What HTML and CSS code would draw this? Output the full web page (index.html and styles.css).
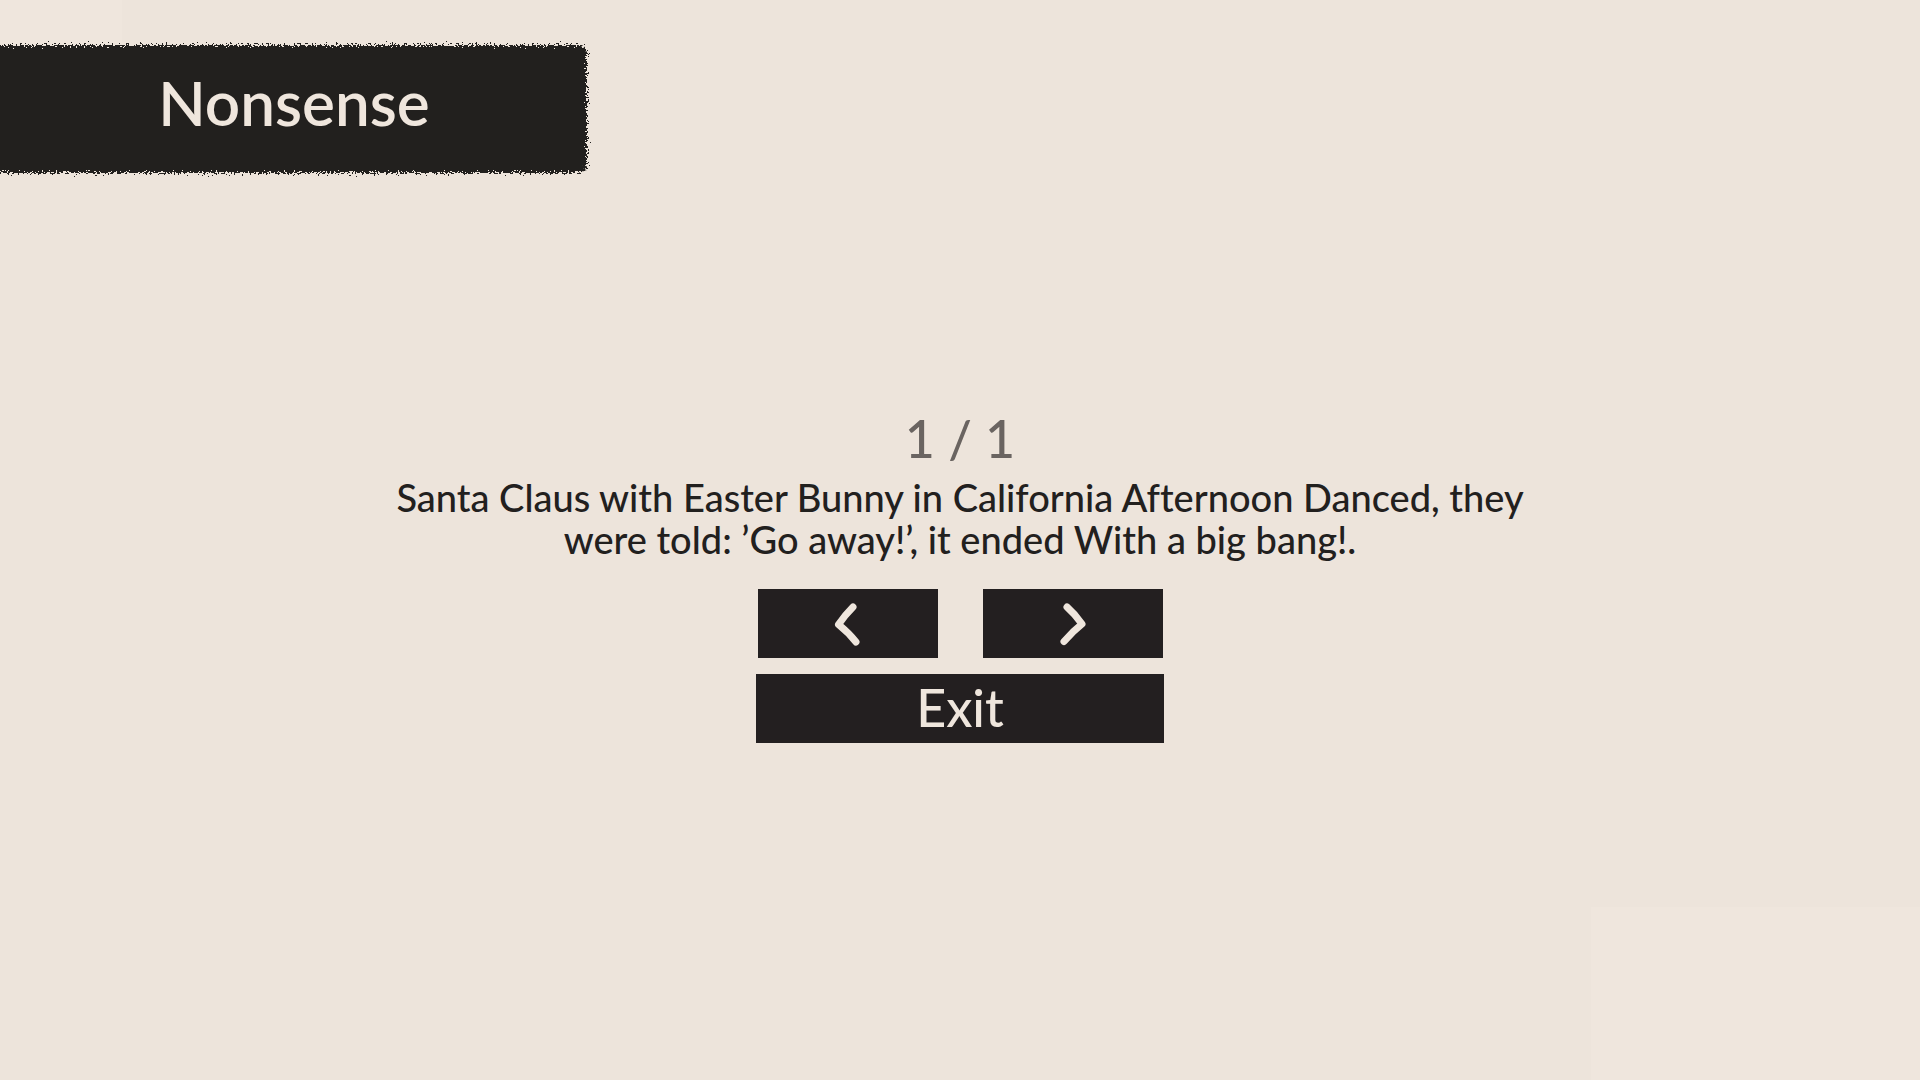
FILE: index.html
```html
<!DOCTYPE html>
<html lang="en">
<head>
<meta charset="UTF-8">
<meta name="viewport" content="width=device-width, initial-scale=1.0">
<title>Nonsense</title>
<link rel="stylesheet" href="styles.css">
</head>
<body>

<!-- Rough edge used by the title banner -->
<svg class="filters" width="0" height="0" aria-hidden="true">
  <filter id="rough" x="-2%" y="-10%" width="104%" height="120%" color-interpolation-filters="sRGB">
    <feTurbulence type="fractalNoise" baseFrequency="0.5 0.6" numOctaves="3" seed="4" result="noise"/>
    <feDisplacementMap in="SourceGraphic" in2="noise" scale="12" xChannelSelector="A" yChannelSelector="G"/>
  </filter>
</svg>

<header class="banner">
  <h1>Nonsense</h1>
</header>

<main class="story">
  <p class="counter">1 / 1</p>
  <p class="sentence">Santa Claus with Easter Bunny in California Afternoon Danced, they were told: ’Go away!’, it ended With a big bang!.</p>
  <div class="pager">
    <button type="button" aria-label="Previous">
      <svg width="24" height="42" viewBox="0 0 24 42"><path d="M17 4Q9 12 2.500 21.500Q13 30 20 39"/></svg>
    </button>
    <button type="button" aria-label="Next">
      <svg width="24" height="42" viewBox="0 0 24 42"><path d="M6 4Q14 11 21 21Q12 28 3 38.500"/></svg>
    </button>
  </div>
  <button type="button" class="exit">Exit</button>
</main>

</body>
</html>
```
FILE: styles.css
```css
body {
  margin: 0;
  min-height: 100vh;
  display: flow-root;
  font-family: Lato, sans-serif;
  font-weight: 500;
  font-variant-ligatures: none;
  color: #22201e;
  background-color: #ede4db;
  /* slightly lighter patches in two corners */
  background-image:
    linear-gradient(#efe6dd, #efe6dd),
    linear-gradient(#efe6dd, #efe6dd);
  background-repeat: no-repeat;
  background-position: right bottom, left top;
  background-size: 329px 173px, 122px 45px;
}
h1, p {
  margin: 0;
  font-weight: inherit;
}
.filters {
  position: absolute;
}
.banner {
  position: relative;
  width: 588px;
  max-width: 100%;
  margin-top: 45px;
  height: 128px;
  display: flex;
  align-items: center;
  justify-content: center;
}
.banner::before {
  content: "";
  position: absolute;
  inset: 0 1px 0 -20px;
  background-color: #22201e;
  border-radius: 8px;
  filter: url(#rough);
}
.banner h1 {
  position: relative;
  padding-bottom: 14px;
  font-size: 62px;
  line-height: 80px;
  font-weight: 600;
  color: #efe6dd;
}
.story {
  display: flex;
  flex-direction: column;
  align-items: center;
  padding: 233px 20px 40px;
  text-align: center;
}
.counter {
  font-size: 52px;
  line-height: 64px;
  color: #6a6461;
}
.sentence {
  max-width: 1200px;
  margin-top: 6px;
  font-size: 38px;
  line-height: 42px;
}
.pager {
  display: flex;
  gap: 45px;
  margin: 29px 0 16px;
}
button {
  width: 180px;
  height: 69px;
  padding: 0;
  border: none;
  display: flex;
  align-items: center;
  justify-content: center;
  background-color: #231f20;
  color: #efe6dd;
  font-family: inherit;
  font-weight: inherit;
  font-size: 52px;
  line-height: 64px;
  cursor: pointer;
}
button svg {
  fill: none;
  stroke: #efe6dd;
  stroke-width: 7;
  stroke-linecap: round;
  stroke-linejoin: round;
  overflow: visible;
}
.exit {
  width: 408px;
  padding-bottom: 4px;
}
```
